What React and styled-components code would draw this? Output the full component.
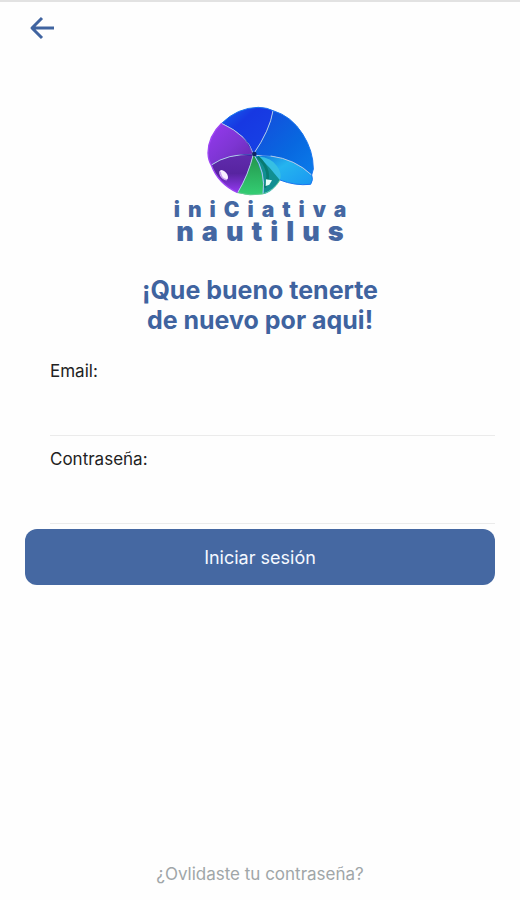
import React, { useState } from "react";
import styled, { createGlobalStyle } from "styled-components";

const GlobalStyle = createGlobalStyle`
  * {
    box-sizing: border-box;
  }
  body {
    margin: 0;
    background-color: #fefefe;
    font-family: "Inter", "Liberation Sans", sans-serif;
  }
`;

const Container = styled.main`
  display: flex;
  flex-direction: column;
  min-height: 100vh;
  padding: 0 25px 14px;
  border-top: 2px solid #e2e2e2;
`;
const Header = styled.header`
  display: flex;
  height: 52px;
  align-items: center;
`;
const BackButton = styled.button`
  display: flex;
  padding: 4px;
  border: none;
  background: none;
  color: #4064a0;
  cursor: pointer;
`;
const Brand = styled.div`
  display: flex;
  flex-direction: column;
  align-items: center;
  gap: 4px;
  margin-top: 52px;
`;
const BrandName = styled.div`
  display: flex;
  flex-direction: column;
  align-items: center;
  padding-left: 8px;
  color: #4467a2;
  font-weight: 900;
  letter-spacing: 8px;
`;
const BrandLine = styled.span`
  font-size: ${(props) => (props.$large ? "27px" : "21px")};
  line-height: ${(props) => (props.$large ? "23px" : "20px")};
`;
const Title = styled.h1`
  margin: 32px 0 0;
  color: #3f639f;
  font-size: 25px;
  font-weight: 700;
  line-height: 30px;
  text-align: center;
  white-space: pre-line;
`;
const Form = styled.form`
  display: flex;
  flex-direction: column;
  margin-top: 24px;
`;
const Field = styled.div`
  display: flex;
  flex-direction: column;
  margin-left: 25px;
  height: 88px;
`;
const Label = styled.label`
  color: #222;
  font-size: 17px;
  line-height: 24px;
`;
const Input = styled.input`
  width: 100%;
  height: 53px;
  padding: 0;
  border: none;
  border-bottom: 1px solid #ebebeb;
  background: none;
  font: inherit;
  font-size: 17px;
  outline: none;
`;
const SubmitButton = styled.button`
  height: 56px;
  margin-top: -6px;
  border: none;
  border-radius: 12px;
  background-color: #4568a2;
  color: #f4f8ff;
  font: inherit;
  font-size: 18px;
  cursor: pointer;
`;
const ForgotLink = styled.a`
  align-self: center;
  margin-top: auto;
  color: #a0a6a8;
  font-size: 17px;
  line-height: 24px;
  text-decoration: none;
`;

const BackIcon = () => (
  <svg width="26" height="24" viewBox="0 0 26 24" fill="none" aria-hidden="true">
    <path
      d="M13 2 3 12l10 10M3 12h22"
      stroke="currentColor"
      strokeWidth="3"
      strokeLinejoin="round"
    />
  </svg>
);

const Shell = () => (
  <svg width="110" height="90" viewBox="45 33 330 270" role="img" aria-label="Nautilus">
    <defs>
      <linearGradient id="blue" x1="0" y1="0" x2="1" y2="1">
        <stop offset="0" stopColor="#1764ee" />
        <stop offset="0.35" stopColor="#1738e2" />
        <stop offset="1" stopColor="#1744e6" />
      </linearGradient>
      <linearGradient id="sky" x1="0" y1="0" x2="1" y2="1">
        <stop offset="0" stopColor="#1549dc" />
        <stop offset="0.6" stopColor="#0868e0" />
        <stop offset="1" stopColor="#0a7cea" />
      </linearGradient>
      <linearGradient id="violet" x1="0" y1="0" x2="1" y2="1">
        <stop offset="0" stopColor="#963af0" />
        <stop offset="0.55" stopColor="#7d35d2" />
        <stop offset="1" stopColor="#6527ad" />
      </linearGradient>
      <linearGradient id="purple" x1="0" y1="0" x2="0" y2="1">
        <stop offset="0" stopColor="#602bad" />
        <stop offset="0.5" stopColor="#5724a0" />
        <stop offset="1" stopColor="#943af0" />
      </linearGradient>
      <linearGradient id="mouth" x1="0" y1="0" x2="1" y2="1">
        <stop offset="0" stopColor="#0d6dda" />
        <stop offset="0.4" stopColor="#25b4ef" />
        <stop offset="1" stopColor="#1690f3" />
      </linearGradient>
      <linearGradient id="green" x1="0" y1="0" x2="0" y2="1">
        <stop offset="0" stopColor="#23934b" />
        <stop offset="1" stopColor="#34ce73" />
      </linearGradient>
    </defs>
    <path d="M190 178 202 182 250 184Q315 196 365 240Q371 254 362 268Q315 273 270 255Q258 275 242 288Q226 299 216 297Z" fill="url(#mouth)" />
    <path d="M190 178Q175 122 95 85Q142 38 205 37Q232 38 249 47Q240 105 190 178Z" fill="url(#blue)" />
    <path d="M190 178Q240 105 249 47Q304 63 338 117Q370 167 370 222L365 240Q320 197 246 183Q217 183 190 178Z" fill="url(#sky)" />
    <path d="M190 178Q175 122 95 85Q55 123 54 174Q55 197 64 210Q112 176 190 178Z" fill="url(#violet)" />
    <path d="M190 178Q112 176 64 210Q84 266 143 293Q175 240 190 178Z" fill="url(#purple)" />
    <path d="M190 178Q175 240 143 293Q180 304 218 297Q226 237 190 178Z" fill="url(#green)" />
    <path d="M194 180Q225 205 250 218Q275 232 270 255Q255 281 221 296Q226 230 194 180Z" fill="#118f91" />
    <path d="M205 184Q245 190 260 212Q277 233 270 256Q239 216 205 184Z" fill="#36bfe3" />
    <path d="M203 185Q250 229 224 278" fill="none" stroke="#087b72" strokeWidth="8" />
    <path
      d="M190 178Q175 122 95 85M190 178Q240 105 249 47M190 178Q112 176 64 210M190 178Q175 240 143 293M192 180Q228 230 219 297M242 183Q315 192 365 240"
      fill="none"
      stroke="#adc9ea"
      strokeWidth="3"
    />
    <path d="M95 85Q142 38 205 37Q232 38 249 47Q304 63 338 117Q370 167 370 222L365 240Q371 254 362 268Q315 273 270 255" fill="none" stroke="#1975ee" strokeWidth="3" />
    <path d="M95 85Q55 123 54 174Q55 197 64 210Q84 266 143 293" fill="none" stroke="#9d45f4" strokeWidth="4" />
    <path d="M143 293Q180 304 218 297Q252 287 270 255" fill="none" stroke="#65c992" strokeWidth="3" />
    <path d="M188 176Q175 144 157 125Q174 137 188 174ZM186 178 140 178 185 182Z" fill="#2626a7" />
    <circle cx="193" cy="177" r="7" fill="#102464" />
    <ellipse cx="101" cy="240" rx="10" ry="17" fill="#f8efff" transform="rotate(-38 101 240)" />
    <path d="M91 230Q91 249 110 255" fill="none" stroke="#c79af1" strokeWidth="4" />
    <path d="M228 253 246 256 238 269 227 273Z" fill="#e4fff9" />
  </svg>
);

const App = () => {
  const [email, setEmail] = useState("");
  const [password, setPassword] = useState("");

  return (
    <>
      <GlobalStyle />
      <Container>
        <Header>
          <BackButton type="button" aria-label="Volver">
            <BackIcon />
          </BackButton>
        </Header>
        <Brand>
          <Shell />
          <BrandName>
            <BrandLine>iniCiativa</BrandLine>
            <BrandLine $large>nautilus</BrandLine>
          </BrandName>
        </Brand>
        <Title>{"¡Que bueno tenerte\n de nuevo por aqui!"}</Title>
        <Form onSubmit={(e) => e.preventDefault()}>
          <Field>
            <Label htmlFor="email">Email:</Label>
            <Input
              id="email"
              type="email"
              value={email}
              onChange={(e) => setEmail(e.target.value)}
            />
          </Field>
          <Field>
            <Label htmlFor="password">Contraseña:</Label>
            <Input
              id="password"
              type="password"
              value={password}
              onChange={(e) => setPassword(e.target.value)}
            />
          </Field>
          <SubmitButton type="submit">Iniciar sesión</SubmitButton>
        </Form>
        <ForgotLink href="#recuperar">¿Ovlidaste tu contraseña?</ForgotLink>
      </Container>
    </>
  );
};

export default App;
